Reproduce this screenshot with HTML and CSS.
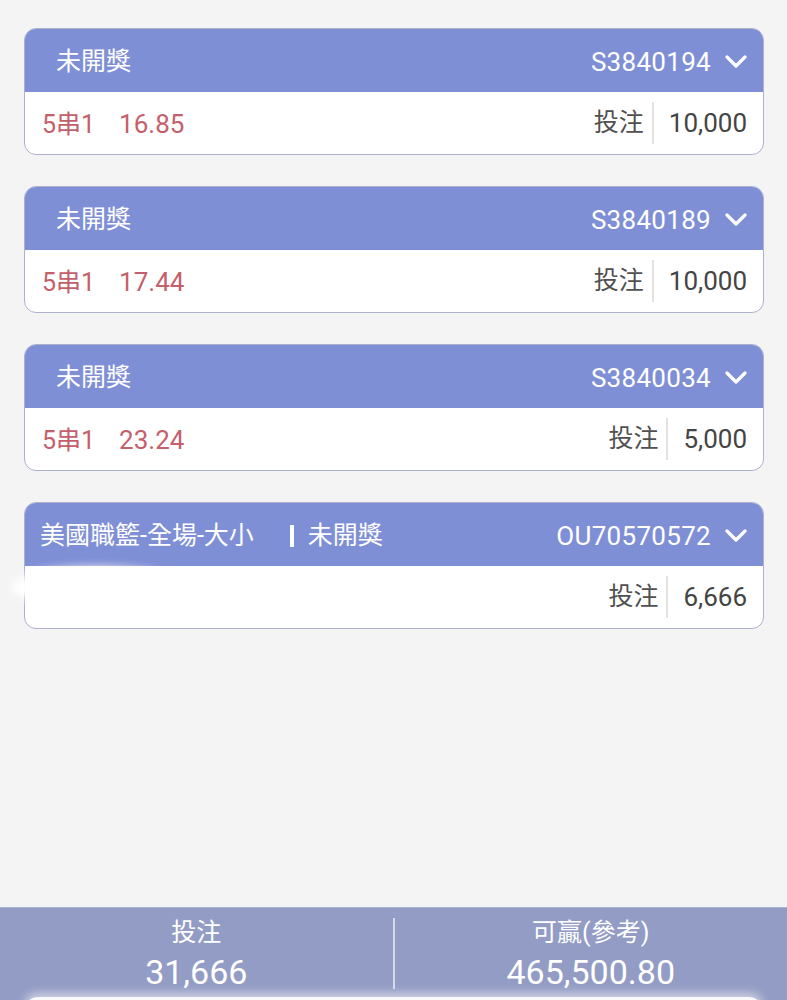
FILE: index.html
```html
<!DOCTYPE html>
<html lang="zh-Hant">
<head>
    <meta charset="UTF-8">
    <meta name="viewport" content="width=device-width, initial-scale=1.0">
    <title>注單</title>
    <link rel="stylesheet" href="styles.css">
</head>
<body>

<div class="page">
    <div class="list">
        <!-- Parlay bets -->
        <div class="bet">
            <div class="bet-head">
                <span class="status">未開獎</span>
                <span class="bet-id">S3840194
                    <svg class="chev" viewBox="0 0 22 14"><path d="M2 2 L11 11 L20 2"/></svg>
                </span>
            </div>
            <div class="bet-body">
                <span class="combo">5串1<span class="odds">16.85</span></span>
                <span class="stake"><span class="stake-label">投注</span><span class="stake-amt">10,000</span></span>
            </div>
        </div>

        <div class="bet">
            <div class="bet-head">
                <span class="status">未開獎</span>
                <span class="bet-id">S3840189
                    <svg class="chev" viewBox="0 0 22 14"><path d="M2 2 L11 11 L20 2"/></svg>
                </span>
            </div>
            <div class="bet-body">
                <span class="combo">5串1<span class="odds">17.44</span></span>
                <span class="stake"><span class="stake-label">投注</span><span class="stake-amt">10,000</span></span>
            </div>
        </div>

        <div class="bet">
            <div class="bet-head">
                <span class="status">未開獎</span>
                <span class="bet-id">S3840034
                    <svg class="chev" viewBox="0 0 22 14"><path d="M2 2 L11 11 L20 2"/></svg>
                </span>
            </div>
            <div class="bet-body">
                <span class="combo">5串1<span class="odds">23.24</span></span>
                <span class="stake"><span class="stake-label">投注</span><span class="stake-amt">5,000</span></span>
            </div>
        </div>

        <!-- Single bet -->
        <div class="bet single">
            <div class="bet-head">
                <span class="status">美國職籃-全場-大小<span class="sep"></span>未開獎</span>
                <span class="bet-id">OU70570572
                    <svg class="chev" viewBox="0 0 22 14"><path d="M2 2 L11 11 L20 2"/></svg>
                </span>
            </div>
            <div class="bet-body">
                <span class="combo"></span>
                <span class="stake"><span class="stake-label">投注</span><span class="stake-amt">6,666</span></span>
            </div>
            <div class="smudge"></div>
        </div>
    </div>

    <!-- Totals -->
    <div class="totals">
        <div class="total">
            <span class="total-label">投注</span>
            <span class="total-val">31,666</span>
        </div>
        <div class="total">
            <span class="total-label">可贏(參考)</span>
            <span class="total-val">465,500.80</span>
        </div>
        <div class="sheet"></div>
    </div>
</div>

</body>
</html>
```

FILE: styles.css
```css
/* Page */
body {
    margin: 0;
    background: #f4f4f5;
    font-family: Roboto, "Noto Sans CJK TC", "Noto Sans", sans-serif;
}

.page {
    height: 1000px;
    display: flex;
    flex-direction: column;
    overflow: hidden;
}

.list {
    flex: 1;
    padding: 28px 23px 0 24px;
    display: flex;
    flex-direction: column;
    gap: 31px;
}

/* Bet card */
.bet {
    position: relative;
    border: 1px solid #aeb1cc;
    border-radius: 12px;
    background: #fff;
}

.bet-head {
    height: 63px;
    background: #7f8fd6;
    color: #fff;
    border-radius: 11px 11px 0 0;
    display: flex;
    align-items: center;
    justify-content: space-between;
    padding: 0 16px 0 31px;
}

.single .bet-head {
    padding-left: 15px;
}

.status {
    font-size: 25px;
    line-height: 30px;
    display: flex;
    align-items: center;
    margin-top: 3px;
}

.sep {
    display: inline-block;
    width: 4px;
    height: 22px;
    background: #fff;
    margin: 0 14px 0 36px;
}

.bet-id {
    font-size: 26px;
    line-height: 30px;
    display: flex;
    align-items: center;
    letter-spacing: 0.3px;
    margin-top: 2px;
}

.chev {
    width: 22px;
    height: 14px;
    margin-left: 14px;
    fill: none;
    stroke: #fff;
    stroke-width: 3.2;
    stroke-linecap: round;
    stroke-linejoin: round;
}

.bet-body {
    height: 62px;
    display: flex;
    align-items: center;
    justify-content: space-between;
    padding: 0 16px 0 17px;
}

.combo {
    color: #c4606b;
    font-size: 25px;
    margin-top: -2px;
}

.odds {
    margin-left: 24px;
    font-size: 26px;
}

.stake {
    display: flex;
    align-items: center;
    color: #505050;
}

.stake-label {
    font-size: 25px;
    padding-right: 8px;
    border-right: 2px solid #e2e2e2;
    line-height: 42px;
}

.stake-amt {
    font-size: 26px;
    color: #444;
    padding-left: 15px;
}

/* blurred-out area on the last card */
.smudge {
    position: absolute;
    left: -14px;
    top: 64px;
    width: 170px;
    height: 40px;
    background: #fff;
    border-radius: 50%;
    filter: blur(5px);
}

/* Totals bar */
.totals {
    position: relative;
    height: 92px;
    background: #939cc4;
    border-top: 1px solid #a9b0d2;
    display: flex;
    color: #fff;
}

.total {
    flex: 1;
    display: flex;
    flex-direction: column;
    align-items: center;
    margin: 10px 0 11px;
}

.total + .total {
    border-left: 2px solid #d6d9ea;
}

.total-label {
    font-size: 25px;
    line-height: 30px;
}

.total-val {
    font-size: 34px;
    line-height: 40px;
    margin-top: 4px;
}

.sheet {
    position: absolute;
    left: 24px;
    right: 24px;
    bottom: -20px;
    height: 23px;
    background: #fafafc;
    border-radius: 14px 14px 0 0;
    box-shadow: 0 -4px 10px rgba(255, 255, 255, 0.55);
}
```
